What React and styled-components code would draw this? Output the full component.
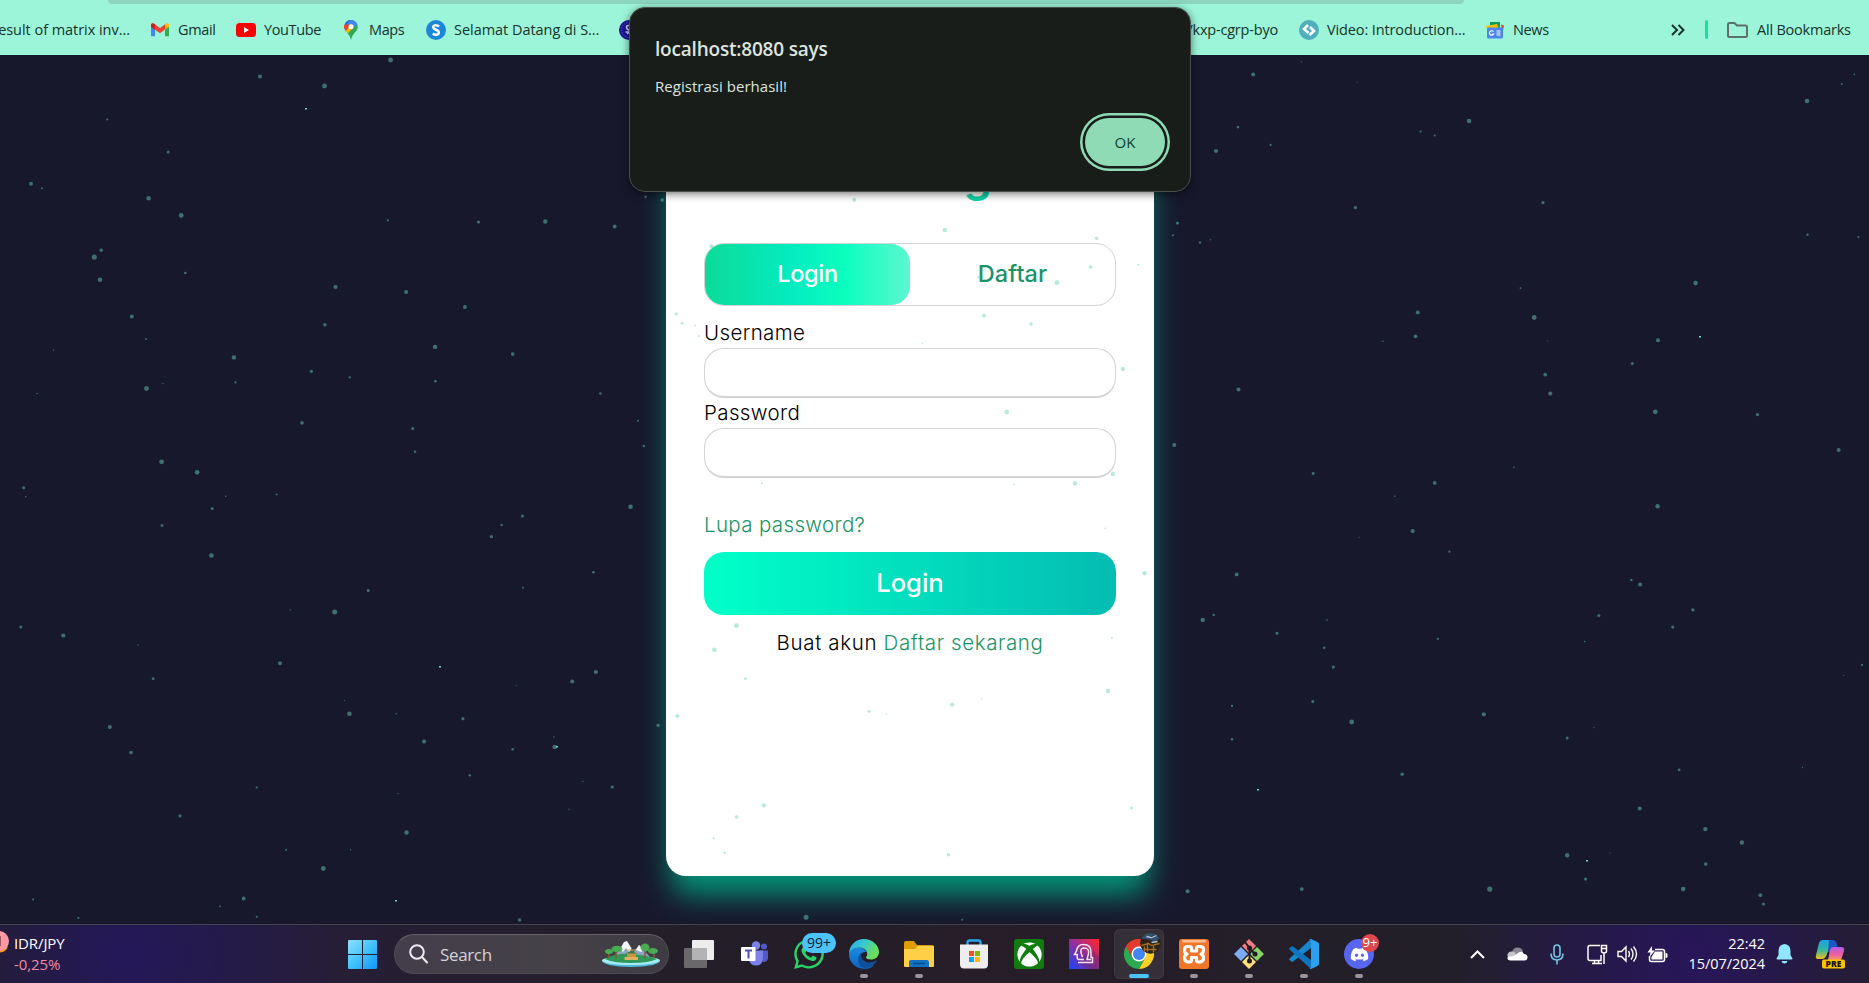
import React from "react";
import styled, { createGlobalStyle, css } from "styled-components";
import { FaWhatsapp, FaDiscord, FaXbox } from "react-icons/fa";

const Global = createGlobalStyle`
  * { box-sizing: border-box; }
  html, body { margin: 0; padding: 0; height: 100%; overflow: hidden; background: #18182d; }
  body { font-family: "Open Sans", "Noto Sans", sans-serif; }
`;

const Screen = styled.div`
  width: 100vw;
  height: 983px;
  display: flex;
  flex-direction: column;
  overflow: hidden;
  position: relative;
  background: #18182d;
`;

/* ---------- bookmarks bar ---------- */
const Bar = styled.header`
  height: 55px;
  flex: none;
  display: flex;
  flex-direction: column;
  background: #9df5d9;
  overflow: hidden;
`;
const Omnibox = styled.div`
  height: 4px;
  flex: none;
  width: 1356px;
  margin-left: 108px;
  background: #8cd6c0;
  border-radius: 0 0 10px 10px;
`;
const Bookmarks = styled.nav`
  height: 51px;
  display: flex;
  align-items: center;
`;
const Bookmark = styled.div`
  width: ${(p) => p.$w}px;
  margin-left: ${(p) => p.$ml || 0}px;
  height: 22px;
  flex: none;
  display: flex;
  align-items: center;
  justify-content: ${(p) => (p.$end ? "flex-end" : "flex-start")};
  gap: 8px;
  font-size: 14.5px;
  letter-spacing: ${(p) => p.$ls || -0.38}px;
  color: #17332b;
  white-space: nowrap;
  svg { flex: none; display: block; }
`;
const Divider = styled.i`
  width: 3px;
  height: 19px;
  border-radius: 2px;
  margin: 0 19px 0 20px;
  background: #19e19d;
`;

/* ---------- page ---------- */
const Page = styled.main`
  height: 869px;
  flex: none;
  display: flex;
  justify-content: center;
  padding-right: 49px;
`;
const Card = styled.section`
  width: 488px;
  height: 766px;
  margin-top: 55px;
  padding: 23px 38px 0 38px;
  display: flex;
  flex-direction: column;
  border-radius: 20px;
  background: #fff;
  font-family: Inter, sans-serif;
  box-shadow: 0 24px 30px -6px rgb(4, 152, 122);
`;
const Title = styled.h1`
  margin: 0;
  height: 110px;
  line-height: 83px;
  font-size: 46px;
  font-weight: 600;
  letter-spacing: -1px;
  text-align: center;
  color: #0fd4a6;
`;
const Tabs = styled.div`
  height: 63px;
  flex: none;
  display: flex;
  border: 1px solid #d3d3d3;
  border-radius: 20px;
`;
const Tab = styled.button`
  flex: 1;
  border: 0;
  border-radius: 19px;
  padding: 0 0 2px;
  font: 500 23.5px Inter, sans-serif;
  letter-spacing: ${(p) => (p.$active ? -0.3 : 0.1)}px;
  color: #1a9467;
  background: transparent;
  ${(p) =>
    p.$active &&
    css`
      color: #fff;
      background: linear-gradient(90deg, #0cdb98 0%, #04ecc0 43%, #0bffbf 68%, #5df7d0 100%);
    `}
`;
const Label = styled.label`
  margin-top: ${(p) => p.$mt}px;
  height: 30px;
  line-height: 30px;
  font-size: 20.5px;
  font-weight: 300;
  letter-spacing: 0.38px;
  color: #000;
`;
const Field = styled.input`
  height: 50px;
  flex: none;
  width: 100%;
  border: 1px solid #d3d3d3;
  border-bottom-width: 2px;
  border-radius: 20px;
  outline: 0;
  padding: 0 15px;
  background: #fff;
`;
const Link = styled.a`
  color: #1a9467;
  font-size: 20.5px;
  font-weight: 300;
  letter-spacing: ${(p) => p.$ls}px;
`;
const Forgot = styled.div`
  margin-top: 32px;
  height: 42px;
  line-height: 30px;
`;
const Submit = styled.button`
  height: 63px;
  flex: none;
  border: 0;
  border-radius: 20px;
  padding: 0 0 3px;
  font: 500 25.5px Inter, sans-serif;
  color: #fff;
  background: linear-gradient(90deg, #00ffc8 3%, #04bdb3 98%);
`;
const Signup = styled.p`
  margin: 13px 0 0;
  line-height: 30px;
  font-size: 20.5px;
  font-weight: 300;
  text-align: center;
  color: #000;
  letter-spacing: 0.65px;
`;
const Stars = styled.svg`
  position: absolute;
  left: 0;
  top: 0;
  pointer-events: none;
`;

/* ---------- alert ---------- */
const Alert = styled.div`
  position: absolute;
  left: 629px;
  top: 7px;
  width: 562px;
  height: 185px;
  padding: 27px 24px 0 25px;
  display: flex;
  flex-direction: column;
  border: 1px solid #484e4a;
  border-radius: 16px;
  background: #181d19;
  color: #dee4de;
  box-shadow: 0 2px 8px rgba(0, 0, 0, 0.55);
`;
const AlertTitle = styled.div`
  height: 28px;
  line-height: 28px;
  font-size: 19px;
  font-weight: 600;
  letter-spacing: -0.2px;
`;
const AlertText = styled.div`
  margin-top: 12px;
  height: 22px;
  line-height: 22px;
  font-size: 15px;
  letter-spacing: 0.03px;
`;
const Ok = styled.button`
  align-self: flex-end;
  margin: 21px 1px 0 0;
  width: 80px;
  height: 48px;
  border: 0;
  border-radius: 24px;
  background: #8fdbb6;
  color: #0c4430;
  font: 500 15px "Open Sans", sans-serif;
  box-shadow: 0 0 0 2.500px #181d19, 0 0 0 5px #8fdbb6;
`;

/* ---------- taskbar ---------- */
const Taskbar = styled.footer`
  height: 59px;
  flex: none;
  display: flex;
  align-items: center;
  position: relative;
  border-top: 1px solid #46424d;
  background:
    radial-gradient(ellipse 210px 260px at 128px 30px, #24185a 0%, rgba(36, 24, 90, 0) 100%),
    radial-gradient(ellipse 230px 260px at 1690px 30px, #28165a 0%, rgba(40, 22, 90, 0) 100%),
    linear-gradient(90deg, #231f2a, #261e38 15%, #231e28 35%, #261d28 55%, #221f28 75%, #221e34 88%, #231f28);
  color: #fff;
`;
const Ticker = styled.div`
  width: 348px;
  flex: none;
  display: flex;
  padding-bottom: 1px;
  font-size: 15px;
  line-height: 21px;
  letter-spacing: -0.1px;
`;
const TickerIcon = styled.svg`
  width: 14px;
  height: 22px;
  margin-top: -2px;
  flex: none;
`;
const Loss = styled.div`
  color: #f08ba0;
`;
const Search = styled.div`
  width: 275px;
  height: 40px;
  flex: none;
  margin: 0 3px 0 17px;
  padding: 0 8px 0 14px;
  display: flex;
  align-items: center;
  border-radius: 20px;
  border: 1px solid #4e4a53;
  border-top-color: #67636b;
  background: linear-gradient(90deg, #433e4b, #454147 60%, #3f3b43);
  color: #d5d2d6;
  font-size: 17px;
  letter-spacing: -0.35px;
  span { flex: 1; margin-left: 12px; }
`;
const AppSlot = styled.div`
  position: relative;
  width: 50px;
  height: 50px;
  margin-right: 5px;
  margin-left: ${(p) => (p.$first ? 2 : 0)}px;
  flex: none;
  display: flex;
  align-items: center;
  justify-content: center;
  border-radius: 6px;
  ${(p) => p.$active && "background:#353037;box-shadow:inset 0 0 0 1px #3e3a41;"}
  &::after {
    content: "";
    display: ${(p) => (p.$run || p.$active ? "block" : "none")};
    position: absolute;
    bottom: 1px;
    left: 50%;
    transform: translateX(-50%);
    width: ${(p) => (p.$active ? 20 : 8)}px;
    height: 4px;
    border-radius: 2px;
    background: ${(p) => (p.$active ? "#4cc2ff" : "#99959b")};
  }
  svg { display: block; overflow: visible; }
`;
const Badge = styled.b`
  position: absolute;
  top: ${(p) => p.$top}px;
  left: ${(p) => p.$left}px;
  width: ${(p) => p.$w}px;
  height: ${(p) => p.$h}px;
  line-height: ${(p) => p.$h - 1}px;
  border-radius: 10px;
  text-align: center;
  font-weight: 400;
  font-size: ${(p) => p.$fs}px;
  color: ${(p) => p.$color};
  background: ${(p) => p.$bg};
`;
const Tray = styled.div`
  margin-left: auto;
  margin-right: 24px;
  display: flex;
  align-items: center;
  svg { display: block; flex: none; }
`;
const TrayItem = styled.span`
  margin-left: ${(p) => p.$ml}px;
`;
const Clock = styled.div`
  width: 87px;
  margin-left: 10px;
  text-align: right;
  font-size: 14.5px;
  line-height: 20px;
  letter-spacing: -0.05px;
`;

/* x, y, radius */
const STARS = [
  [390.6,60,2.4],[260,76.6,2],[324.5,86,2.4],[107.3,119.4,1],[168.2,152.1,1.5],[31,183.7,2],[42,188.2,1],[148.6,198.2,2.2],
  [181.2,215.4,2.4],[387.8,220.4,1.1],[478.4,222,1.6],[545.3,221.5,2.2],[614.7,226.5,1.9],[101.2,250.3,1.7],[94.3,257,2.6],
  [100,279.7,2.3],[185.3,273,1.3],[335.5,287,2.1],[406.1,292,2],[464.9,307,1.9],[131.8,316.4,2],[324.9,324.7,1.7],[146.1,339,.9],
  [53.5,350.2,.6],[435.1,346.9,2.2],[512.7,354.1,1.8],[233.9,357.4,2.2],[311.4,371.3,1.6],[349.8,377.4,1.1],[235.5,382.4,1.1],
  [162.9,383.5,.7],[146.5,388.5,2.4],[435.5,381.3,1.3],[37.1,393.5,.7],[600.4,393.5,1.3],[638,420.7,1],[302,422.9,1.8],
  [412.7,428.5,1.5],[415.1,451.8,1.2],[161.6,461.8,2.4],[197.1,472.3,2.4],[23.7,487.8,1.5],[25.7,496.7,.8],[225.7,496.2,.8],
  [276.7,494.5,1],[212.2,508.4,1.5],[630.6,506.7,2.3],[162,525.6,1.4],[522.4,516.1,1.5],[501.6,525,1.2],[491.4,536.7,1.6],
  [211.4,555.5,2.3],[593.5,572.2,1.3],[368.2,590.5,1.5],[522.9,587.7,.9],[290.2,609.9,.7],[334.7,612.1,2.5],[20.8,627.1,1.5],
  [63.3,635.5,2.1],[138,644.9,.7],[280,663.2,2],[153.1,678.7,1.4],[572.2,681.5,2],[595.9,672,2.1],[344.5,700.4,.5],
  [349.4,713.7,2.3],[396.3,713.7,.8],[516.3,685.4,.5],[462.9,718.7,1.6],[109.8,727,2],[424.1,741.5,2.1],[554.7,747,2.3],
  [553.9,737,.7],[512.7,749.2,1.3],[131,752.6,1.8],[469.8,775.3,1.2],[256.7,787.5,1.1],[582.9,781.4,.6],[612.2,787,1.6],
  [398,793.6,.7],[569,809.2,.6],[180,815.8,1.6],[406.5,832.5,2.2],[286.1,849.7,1],[350.6,849.7,.7],[323.3,868.5,2.4],
  [243.7,898.5,1.9],[33.1,899.6,1],[220,906.3,.9],[78.4,918,1.1],[256.7,916.8,1],[519.6,920,1.7],
  [1253.2,74.4,2],[1301.3,61.7,.6],[1357.2,82.2,.5],[1854.3,74.4,.8],[1841.9,83.9,1],[1807,101,2.3],[1238,127.1,1.3],
  [1469.1,121,2.3],[1420.5,131.6,1.1],[1434.7,135.5,1],[1216,151,2.1],[1270.6,144.9,1.1],[1543,202.6,1.6],[1355.4,207.6,1.6],
  [1177.5,223.1,1.6],[1172.9,235.3,1],[1200,242.6,1.2],[1210.5,239.8,.7],[1807.5,234.8,1.2],[1858.4,237,.9],[1520.5,288.1,.9],
  [1695.6,283.1,2.3],[1417.8,312.5,2],[1534.2,317.5,2.4],[1382.9,341.3,.8],[1415.5,336.3,1.9],[1547.5,340.8,.5],[1658,340.2,2],
  [1632.3,363.5,1.5],[1545.2,374.6,1.9],[1550.3,393.5,2.1],[1238.5,389.6,2],[1655.3,411.8,2.4],[1757.5,414.6,1.7],
  [1174.3,445.1,2],[1838.7,450.1,2],[1514,467.3,.8],[1313.2,473.4,1.5],[1434.7,482.9,1.9],[1394.8,496.2,.8],[1657.6,506.2,2.2],
  [1412.7,531.1,2.1],[1359.1,537.2,.5],[1449.4,551.7,1.1],[1236.7,574.4,1.9],[1631.4,580,1.2],[1640.1,584.4,2],
  [1692.9,609.9,1.7],[1202.7,619.9,2.2],[1213.7,614.9,1.2],[1327,619.9,.8],[1598.9,615.5,1.5],[1277,633.2,1.5],
  [1672.7,627.1,1.6],[1437.9,638.8,1.1],[1584.7,641.6,.8],[1324.2,647.7,1.2],[1333.4,667.1,1.5],[1862,664.9,1.1],
  [1843.7,675.4,.6],[1232,705.9,1.2],[1312.8,701.5,1.5],[1483.8,714.3,2.1],[1351.7,722,2.4],[1593.8,727.6,.6],[1232,739.2,1.2],
  [1567.2,738.1,1.5],[1402.2,774.2,1.7],[1679.1,769.8,1.4],[1802.5,767.5,.7],[1639.7,808.6,2],[1705.3,829.1,2.2],
  [1741.9,842.5,2.2],[1567.2,855.2,2.2],[1609.9,853,.6],[1705.7,864.1,1.8],[1585.6,879.1,1.6],[1187.6,891.3,2],
  [1301.8,889.1,1.9],[1489.8,889.1,2.6],[1683.2,889.1,2.3],[1760.3,895.2,1.9],[1763.5,904,1.6],
  [854.2,199.7,2],[944.8,230,2.2],[1096.5,238.3,1.8],[1090.6,267,1.8],[1056.9,282.7,2.4],[1138.3,265,1],[711.4,246.3,2],
  [984,315.7,2],[1031,324,1.7],[676.2,314,1.6],[682.2,323.3,1.4],[695.1,325.3,.9],[645.5,196.7,1.2],[662.2,200,1.7],
  [978.9,277.3,1.5],[698.9,336.3,1],[922.4,343.3,.8],[1122.8,369,2.2],[1006.7,412,2.4],[1112.8,474,2.2],[1075,483.3,2.2],
  [761.9,483.3,1],[1014,484.3,.9],[1105.2,528.3,.8],[1144.5,573.3,2.2],[736.4,625.7,2.4],[714.4,649.7,2.2],[1111.8,638,1],
  [643.8,446,1.2],[745.4,678.7,1.4],[1108,691,2.2],[952.2,704.7,2.1],[981.5,699,.7],[869,711.3,1.5],[886.4,714,.7],
  [677.3,716,2.1],[658.1,725.3,1.6],[763.9,805.3,2.1],[736.5,817,1.8],[713.6,838,1.1],[724.7,852.7,1.3],[1131.7,808,1.6],
  [948.5,854.7,1.7],[806.1,917.3,2.5],[962.2,919.7,.9],
];
const GLINTS = [[305,108],[439,666],[556,746],[395,900],[1699,336],[1257,789],[1586,860]];

const GmailIcon = () => (
  <svg width="20" height="20" viewBox="0 0 20 20">
    <path d="M1 5v11.2h4V9.3z" fill="#4285f4" /><path d="M19 5v11.2h-4V9.3z" fill="#34a853" />
    <path d="M1 5.2C1 3 3 2.7 4.3 3.7L10 8l5.700-4.300v5.300L10 13.300 1 6.800z" fill="#ea4335" />
    <path d="M15 4.300C17 2.700 19 3.200 19 5.200v1.600l-4 3z" fill="#fbbc04" /><path d="M1 5.200C1 3.400 3 2.800 5 4.300v5.500l-4-3z" fill="#c5221f" />
  </svg>
);
const YoutubeIcon = () => (
  <svg width="20" height="20" viewBox="0 0 20 20"><rect y="3" width="20" height="14" rx="3.500" fill="#f00" /><path d="M8 7l5 3-5 3z" fill="#fff" /></svg>
);
const MapsIcon = () => (
  <svg width="20" height="20" viewBox="0 0 20 20">
    <defs><clipPath id="pin"><path d="M10 0a6.800 6.800 0 0 0-6.800 6.800C3.200 11.500 8.500 13 10 20c1.500-7 6.800-8.500 6.800-13.200A6.800 6.800 0 0 0 10 0z" /></clipPath></defs>
    <g clipPath="url(#pin)"><path d="M0 0h20v20H0z" fill="#34a853" /><path d="M0 12L12 0H0z" fill="#ea4335" /><path d="M6 3l6-5h8v4l-7 5z" fill="#4285f4" /><path d="M2 13l8-9 3 2-8 10z" fill="#fbbc04" /><path d="M0 9l5-6 4 3-5 6z" fill="#ea4335" /><path d="M5 5l6-6h-4l-4 4z" fill="#1a73e8" /></g>
    <circle cx="10" cy="6.800" r="2.500" fill="#fff" />
  </svg>
);
const RoundS = () => (
  <svg width="20" height="20" viewBox="0 0 20 20"><circle cx="10" cy="10" r="10" fill="#1c86d8" /><path d="M13 6.500C11 4.500 7 5 7.300 7.500 7.600 10 12.700 9.500 12.800 12.300 12.900 15 9 15.500 6.800 13.500" fill="none" stroke="#fff" strokeWidth="2.500" /></svg>
);
const Campus = () => (
  <svg width="20" height="20" viewBox="0 0 20 20"><circle cx="10" cy="10" r="10" fill="#1d1592" /><circle cx="10" cy="10" r="7.500" fill="none" stroke="#6a6ac4" strokeDasharray="1 1.500" /><path d="M11 5.500Q7 5 7.500 7.500T11 10t-3 4M6.500 12h5" fill="none" stroke="#d5d5f5" strokeWidth="1.500" /></svg>
);
const VideoIcon = () => (
  <svg width="20" height="20" viewBox="0 0 20 20"><circle cx="10" cy="10" r="10" fill="#4fafbd" /><path d="M9 5L5 9l4.500 4M11 7l4 4-4.500 4" fill="none" stroke="#fff" strokeWidth="2.600" /></svg>
);
const NewsIcon = () => (
  <svg width="20" height="20" viewBox="0 0 20 20"><rect x="5" y="2" width="10" height="6" fill="#0f9d58" /><path d="M1 6l11-2 2 5H2z" fill="#fbbc04" /><path d="M16 4.500l3 1-1.500 8z" fill="#ea4335" /><rect x="2" y="7.500" width="16" height="11" rx="1.500" fill="#4a86f0" /><path d="M8.500 11.700A2.200 2.200 0 1 0 8.600 14H7M11.500 11h4M11.500 13h4M11.500 15h4" stroke="#fff" strokeWidth="1.200" fill="none" /></svg>
);
const FolderOutline = () => (
  <svg width="22" height="18" viewBox="0 0 22 18"><path d="M1 14.500v-11Q1 2 2.500 2H7.500l2.500 2.500h8.500q1.500 0 1.500 1.500v8.500q0 1.500-1.500 1.500h-16Q1 16 1 14.500z" fill="none" stroke="#5c6f69" strokeWidth="2" /></svg>
);

const WindowsIcon = () => (
  <svg width="29" height="29" viewBox="0 0 29 29">
    <defs><linearGradient id="win" x1="0" y1="0" x2="29" y2="29" gradientUnits="userSpaceOnUse"><stop stopColor="#8fe0ff" /><stop offset=".5" stopColor="#43c3fb" /><stop offset="1" stopColor="#0c95f8" /></linearGradient></defs>
    <path d="M1 0h13v14H0V1q0-1 1-1zM15 0h13q1 0 1 1v13H15zM0 15h14v14H1q-1 0-1-1zM15 15h14v13q0 1-1 1H15z" fill="url(#win)" />
  </svg>
);
const Island = () => (
  <svg width="58" height="28" viewBox="0 0 58 28">
    <path d="M0 20.500h58q-2 6-29 6.500Q2 26.500 0 20.500z" fill="#4fb9dc" /><ellipse cx="29" cy="20.500" rx="29" ry="4.500" fill="#a5ecf2" />
    <path d="M12 17L23 2l8 11 6-8 11 12z" fill="#8fa3c4" /><path d="M18 9l4-7 3-1 5 8-3 3-3-4-3 4zM34 10l3-5 5 5-3 2z" fill="#f1f5fb" />
    <path d="M3 19q10-6 26-5t26 5q-8 4-26 4T3 19z" fill="#2f9757" />
    <path d="M25 12h9v6h-9z" fill="#c9963f" /><path d="M22.500 17h13.500v3H22.500z" fill="#dcb05c" /><path d="M23 13.500q6-1 6.500-6 .5 5 6.500 6z" fill="#397652" /><path d="M25 10h9" stroke="#d9ac50" />
    <path d="M7 12v6M14 10v8M43 9v9M52 12v6" stroke="#8a5a34" strokeWidth="1.500" />
    <g fill="#49ab52"><ellipse cx="7" cy="11.500" rx="4" ry="2.500" /><ellipse cx="15" cy="9" rx="5.500" ry="3.300" /><ellipse cx="43" cy="7.500" rx="4.500" ry="4" /><ellipse cx="51" cy="11" rx="5" ry="3" /></g>
  </svg>
);
const TaskView = () => (
  <svg width="30" height="28" viewBox="0 0 30 28"><rect x="8" width="22" height="20" rx="1" fill="#ededed" /><rect y="8" width="23" height="20" rx="1" fill="#6a686b" /><rect x="8" y="8" width="15" height="12" fill="#b3b2b4" /></svg>
);
const Teams = () => (
  <svg width="28" height="26" viewBox="0 0 28 26"><circle cx="16" cy="4.500" r="4.200" fill="#7b83eb" /><circle cx="24" cy="5.500" r="3" fill="#5059c9" /><path d="M20 9.500h8v8q-1 4-5 3.500z" fill="#5059c9" /><path d="M9 9.500h14v9q-1 6-7 6t-7-6z" fill="#7b83eb" /><rect x="1" y="6" width="14.500" height="14" rx="1" fill="#fff" /><path d="M5 9.500h7M8.500 9.500v8" stroke="#4b53bc" strokeWidth="2" /></svg>
);
const Edge = () => (
  <svg width="30" height="30" viewBox="0 0 30 30">
    <defs>
      <linearGradient id="eg" x1="0" y1="0" x2="1" y2="0.400"><stop stopColor="#2ba8ea" /><stop offset=".5" stopColor="#37c9d0" /><stop offset="1" stopColor="#6ce053" /></linearGradient>
      <linearGradient id="eb" x1="0" y1="0" x2="0" y2="1"><stop stopColor="#1d8ae0" /><stop offset="1" stopColor="#0c63bd" /></linearGradient>
    </defs>
    <path d="M0 15C0 6 7 0 15 0s15 6 15 13c0 5-4 7.500-8 7.500-3 0-5-1-5-2 0-1 2-2 1-5C16 7 4 7 0 15z" fill="url(#eg)" />
    <path d="M0 15C3 7 14 7 17.500 13 11 12 8 21 14 25q4 3 11 1-3 4-10 4A15 15 0 0 1 0 15z" fill="url(#eb)" />
    <path d="M13 13c-3 6 3 12 10 10q3-1 4.500-1.500c.5 0 .5.500 0 1Q22 30 15 29C8 27 7 17 13 13z" fill="#0f4f9c" />
  </svg>
);
const Explorer = () => (
  <svg width="30" height="28" viewBox="0 0 30 28"><path d="M0 3q0-2 2-2h8l3 4h15q2 0 2 2v6H0z" fill="#dd9d05" /><path d="M0 9h11l3-3h16v20q0 1-1 1H1q-1 0-1-1z" fill="#ffcf48" /><path d="M5 27v-5q0-2 2-2h16q2 0 2 2v5z" fill="#1272c4" /><path d="M9 23.500h12" stroke="#0a4e92" strokeWidth="1.500" /></svg>
);
const Store = () => (
  <svg width="30" height="30" viewBox="0 0 30 30"><path d="M8.500 7V3.500q0-2 2-2h9q2 0 2 2V7" fill="none" stroke="#28a8ea" strokeWidth="2.300" /><path d="M1 5.500h28V25q0 4.500-4 4.500H5q-4 0-4-4.500z" fill="#eee" /><path d="M10 12h5v5h-5z" fill="#f25022" /><path d="M16 12h5v5h-5z" fill="#7fba00" /><path d="M10 18h5v5h-5z" fill="#00a4ef" /><path d="M16 18h5v5h-5z" fill="#ffb900" /></svg>
);
const XboxTile = styled.div`
  width: 30px;
  height: 30px;
  display: flex;
  align-items: center;
  justify-content: center;
  border-radius: 3px;
  background: #107c10;
  color: #fff;
  font-size: 25px;
`;
const HeadTile = () => (
  <svg width="30" height="30" viewBox="0 0 30 30">
    <defs><linearGradient id="hd" x1="0" y1="1" x2="1" y2="0.100"><stop stopColor="#1645ff" /><stop offset=".5" stopColor="#8c30a0" /><stop offset="1" stopColor="#ff2430" /></linearGradient></defs>
    <path d="M0 0h30v30H0z" fill="url(#hd)" /><path d="M9 23l9 7h12V18l-8-8z" fill="#5a2460" opacity=".35" />
    <g fill="none" stroke="#f6e4f0" strokeWidth="1.500"><path d="M13.500 20.500H10q-1.800 0-1.800-2V15.500H5.500l2-3.500Q8.500 5.500 14.500 5.500 22 5.500 22 13v5.500h1.500v5H9" /><path d="M13.500 18Q9.500 9.500 14.800 9q5.700 0 4.700 5.500L18 20.500h4" /><path d="M15 20.500h-2.500" /></g>
  </svg>
);
const Chrome = () => (
  <svg width="38" height="38" viewBox="0 0 38 38">
    <path d="M4 19a15 15 0 0 1 28-7.500H19z" fill="#e33b2e" /><path d="M19 4A15 15 0 0 0 6 11.500L12.500 22.700 19 12z" fill="#e33b2e" />
    <path d="M6 11.500A15 15 0 0 0 19 34l6.500-11.200H12.500z" fill="#2da94f" /><path d="M32 11.500A15 15 0 0 1 19 34l6.500-11.500L19 11.500z" fill="#fdd023" />
    <circle cx="19" cy="19" r="7.500" fill="#fff" /><circle cx="19" cy="19" r="6" fill="#4285f4" />
    <g transform="translate(30.500 8.500)"><circle r="10.300" fill="#2c2419" /><path d="M-9-5A10.300 10.300 0 0 1 9-5L5-2-2-4z" fill="#35506f" /><path d="M-4-7l5 1 5-2M1-1l6-1" stroke="#b4c8dd" strokeWidth="1.300" /><path d="M-9 2L-2 0l3 2 8-2M-7 6h13M-3-1v9M3 1v8M-6 3v5" stroke="#a76b25" strokeWidth="1.400" /></g>
  </svg>
);
const Xampp = () => (
  <svg width="30" height="30" viewBox="0 0 30 30"><rect width="30" height="30" rx="3" fill="#f0762a" /><rect x="3" y="1" width="24" height="2.500" rx="1.200" fill="#ffd2b0" opacity=".8" /><path d="M8.500 7.500h2q2 0 2 2V12h5V9.500q0-2 2-2h2q3 0 3 3.500t-2.500 4q2.500 1 2.500 4t-3 4h-2q-2 0-2-2V18.500h-5V21q0 2-2 2h-2q-3-1-3-4T8 15q-2.500-.5-2.500-4t3-3.500z" fill="none" stroke="#fff" strokeWidth="3.200" strokeLinejoin="round" /></svg>
);
const Git = () => (
  <svg width="30" height="30" viewBox="0 0 30 30"><path d="M15 0l7 7-7 7-7-7z" fill="#f37b7d" /><path d="M23 8l7 7-7 7-7-7z" fill="#86d465" /><path d="M7 8l7 7-7 7-7-7z" fill="#7cacf8" /><path d="M15 16l7 7-7 7-7-7z" fill="#ffe078" /><path d="M11 3l4.500 6v13M15.500 9.500l5 5" stroke="#201c24" strokeWidth="2" fill="none" /><g fill="#201c24"><circle cx="15.500" cy="9" r="2.500" /><circle cx="15.500" cy="22" r="2.500" /><circle cx="21" cy="15" r="2.500" /></g></svg>
);
const VsCode = () => (
  <svg width="30" height="30" viewBox="0 0 30 30"><path d="M.5 19.500q-.8 1 0 1.500l2 1.500q.8.500 1.500 0L22 9V0z" fill="#1787ce" /><path d="M.5 10.500q-.8-1 0-1.500l2-1.500q.8-.5 1.500 0L22 21v9z" fill="#0d74bd" /><path d="M22 0l6.500 3Q30 4 30 5v20q0 1-1.500 2L22 30q-1 0-2-1 2 .5 2-1V2q0-1.500-2-1 1-1 2-1z" fill="#2ba2f0" /></svg>
);
const DiscordTile = styled(XboxTile)`
  border-radius: 50%;
  background: #5865f2;
  font-size: 19px;
`;
const Cloud = () => (
  <svg width="21" height="14" viewBox="0 0 21 14"><path d="M5 7q0-6 5-6.500Q15 0 16 5l-8 5z" fill="#8a8695" /><path d="M1 10q-2-4 3-5.500 3-.5 5 2l-3 6z" fill="#c5c3ca" /><path d="M3 13.500q-3-.5-2.500-3 1-2 4.500-1 3-1 6-3.500 4-3 6 1 4 .5 3.500 4-.5 2.500-3 2.500z" fill="#fff" /></svg>
);
const Mic = () => (
  <svg width="14" height="21" viewBox="0 0 14 21" fill="none" stroke="#74c6e4" strokeWidth="1.600"><rect x="4" y="1" width="6" height="12" rx="3" /><path d="M1 9.500q0 6.500 6 6.500t6-6.500M7 16v4.500" /></svg>
);
const Net = () => (
  <svg width="21" height="21" viewBox="0 0 21 21" fill="none" stroke="#fff" strokeWidth="1.500"><path d="M13 1.500H3q-2 0-2 2v11q0 2 2 2h11V11M5 19.500h10M7.500 17v2.500M11.500 17v2.500" /><path d="M14.500 1.500h5V7q0 2-2.500 2t-2.500-2zM14.500 4.500h5M17 9v11" /></svg>
);
const Sound = () => (
  <svg width="21" height="18" viewBox="0 0 21 18" fill="none" stroke="#fff" strokeWidth="1.400"><path d="M1 6.500h3.500L9 2v14l-4.500-4.500H1zM11.500 6q2 3 0 6M14 3.500q4 5.500 0 11M16.500 1.500q6 7.500 0 15" /></svg>
);
const Battery = () => (
  <svg width="21" height="17" viewBox="0 0 21 17"><path d="M8 3.500h7.500q2 0 2 2v8q0 2-2 2h-11q-2 0-2-2V10" fill="none" stroke="#fff" strokeWidth="1.500" /><path d="M8 5.500h7.500v8h-11V11zM18.500 7q2 0 2 1v3q0 1-2 1zM5 0L.5 6.500h3L2.500 11 8 4.500H5z" fill="#fff" /></svg>
);
const Bell = () => (
  <svg width="17" height="20" viewBox="0 0 17 20"><path d="M8.500 0Q14.500.5 14.500 7v4l2 3.500q.3 1-1 1H1.500q-1.300 0-1-1l2-3.500V7Q2.500.5 8.500 0zM5.500 17h6q-.5 2.500-3 2.500t-3-2.500z" fill="#8fe6ff" /></svg>
);
const Copilot = () => (
  <svg width="30" height="30" viewBox="0 0 30 30">
    <defs>
      <linearGradient id="c1" x1="0" y1="0" x2="0" y2="1"><stop stopColor="#1ba3e8" /><stop offset=".5" stopColor="#2fb5a0" /><stop offset="1" stopColor="#f2c01c" /></linearGradient>
      <linearGradient id="c2" x1="0" y1="0" x2="0" y2="1"><stop stopColor="#b15ae8" /><stop offset=".6" stopColor="#f0609a" /><stop offset="1" stopColor="#f59a60" /></linearGradient>
    </defs>
    <path d="M8 1h9l-5 14q-1.500 5-5 5H3q-3 0-2-4L4 4q1-3 4-3z" fill="url(#c1)" /><path d="M14 1h4q2.500 0 3.500 3l1 4q-4-1-5.500 3l-1 3-3-1z" fill="#1e56c8" />
    <path d="M18 8h8q4 0 3 4l-3 9H13l2-10q.8-3 3-3z" fill="url(#c2)" /><rect x="7" y="20.500" width="23" height="9" rx="2" fill="#ffc400" />
    <text x="18.500" y="28" textAnchor="middle" fontFamily="Open Sans" fontWeight="800" fontSize="8.500" fill="#1a1500">PRE</text>
  </svg>
);

export default function App() {
  return (
    <Screen>
      <Global />
      <Bar>
        <Omnibox />
        <Bookmarks>
          <Bookmark $w={130} $ls={-0.04} $end>Result of matrix inv...</Bookmark>
          <Bookmark $ml={20} $w={86}><GmailIcon />Gmail</Bookmark>
          <Bookmark $w={105}><YoutubeIcon />YouTube</Bookmark>
          <Bookmark $w={85}><MapsIcon />Maps</Bookmark>
          <Bookmark $w={193} $ls={-0.04}><RoundS />Selamat Datang di S...</Bookmark>
          <Bookmark $w={20}><Campus /></Bookmark>
          <Bookmark $w={639} $ls={-0.2} $end>meet.google.com/kxp-cgrp-byo</Bookmark>
          <Bookmark $ml={21} $w={186} $ls={-0.12}><VideoIcon />Video: Introduction...</Bookmark>
          <Bookmark $w={186}><NewsIcon />News</Bookmark>
          <svg width="14" height="14" viewBox="0 0 14 14"><path d="M1 2l5 5-5 5M7.500 2l5 5-5 5" fill="none" stroke="#17332b" strokeWidth="2" /></svg>
          <Divider />
          <Bookmark $w={130} $ls={-0.22}><FolderOutline />All Bookmarks</Bookmark>
        </Bookmarks>
      </Bar>

      <Page>
        <Card>
          <Title>Form Login</Title>
          <Tabs>
            <Tab $active>Login</Tab>
            <Tab>Daftar</Tab>
          </Tabs>
          <Label $mt={12}>Username</Label>
          <Field />
          <Label $mt={0}>Password</Label>
          <Field type="password" />
          <Forgot><Link $ls={0.35}>Lupa password?</Link></Forgot>
          <Submit>Login</Submit>
          <Signup>Buat akun <Link $ls={0.6}>Daftar sekarang</Link></Signup>
        </Card>
      </Page>

      <Stars width="1869" height="924" viewBox="0 0 1869 924">
        <g fill="rgb(107,211,178)" fillOpacity=".48">
          {STARS.map(([x, y, r], i) => <circle key={i} cx={x} cy={y} r={r} />)}
        </g>
        {GLINTS.map(([x, y], i) => <rect key={i} x={x} y={y} width="2" height="1.500" fill="#6fd8c0" />)}
      </Stars>

      <Taskbar>
        <Ticker>
          <TickerIcon viewBox="0 0 14 22"><path d="M-4 21Q6 23 8 15z" fill="#f7931e" /><circle cx="-1" cy="10" r="10" fill="#ff9aa5" /><path d="M0 5v10" stroke="#8a4550" strokeWidth="1.500" /></TickerIcon>
          <div>IDR/JPY<Loss>-0,25%</Loss></div>
        </Ticker>
        <WindowsIcon />
        <Search>
          <svg width="19" height="20" viewBox="0 0 19 20" fill="none" stroke="#eceaed" strokeWidth="2"><circle cx="8" cy="8" r="6.800" /><path d="M13 13l5 5.500" strokeLinecap="round" /></svg>
          <span>Search</span>
          <Island />
        </Search>
        <AppSlot $first><TaskView /></AppSlot>
        <AppSlot><Teams /></AppSlot>
        <AppSlot><FaWhatsapp size={34} color="#25d366" /><Badge $top={4} $left={18} $w={34} $h={20} $fs={14} $color="#06202e" $bg="#4cc2ff">99+</Badge></AppSlot>
        <AppSlot $run><Edge /></AppSlot>
        <AppSlot $run><Explorer /></AppSlot>
        <AppSlot><Store /></AppSlot>
        <AppSlot><XboxTile><FaXbox /></XboxTile></AppSlot>
        <AppSlot><HeadTile /></AppSlot>
        <AppSlot $active><Chrome /></AppSlot>
        <AppSlot $run><Xampp /></AppSlot>
        <AppSlot $run><Git /></AppSlot>
        <AppSlot $run><VsCode /></AppSlot>
        <AppSlot $run><DiscordTile><FaDiscord /></DiscordTile><Badge $top={5} $left={27} $w={18} $h={18} $fs={13} $color="#fff" $bg="#dc484e">9+</Badge></AppSlot>
        <Tray>
          <svg width="15" height="9" viewBox="0 0 15 9"><path d="M1 8l6.500-6.500L14 8" fill="none" stroke="#fff" strokeWidth="2" /></svg>
          <TrayItem $ml={22}><Cloud /></TrayItem>
          <TrayItem $ml={22}><Mic /></TrayItem>
          <TrayItem $ml={23}><Net /></TrayItem>
          <TrayItem $ml={9}><Sound /></TrayItem>
          <TrayItem $ml={9}><Battery /></TrayItem>
          <Clock>22:42<br />15/07/2024</Clock>
          <TrayItem $ml={11}><Bell /></TrayItem>
          <TrayItem $ml={22}><Copilot /></TrayItem>
        </Tray>
      </Taskbar>

      <Alert>
        <AlertTitle>localhost:8080 says</AlertTitle>
        <AlertText>Registrasi berhasil!</AlertText>
        <Ok>OK</Ok>
      </Alert>
    </Screen>
  );
}
